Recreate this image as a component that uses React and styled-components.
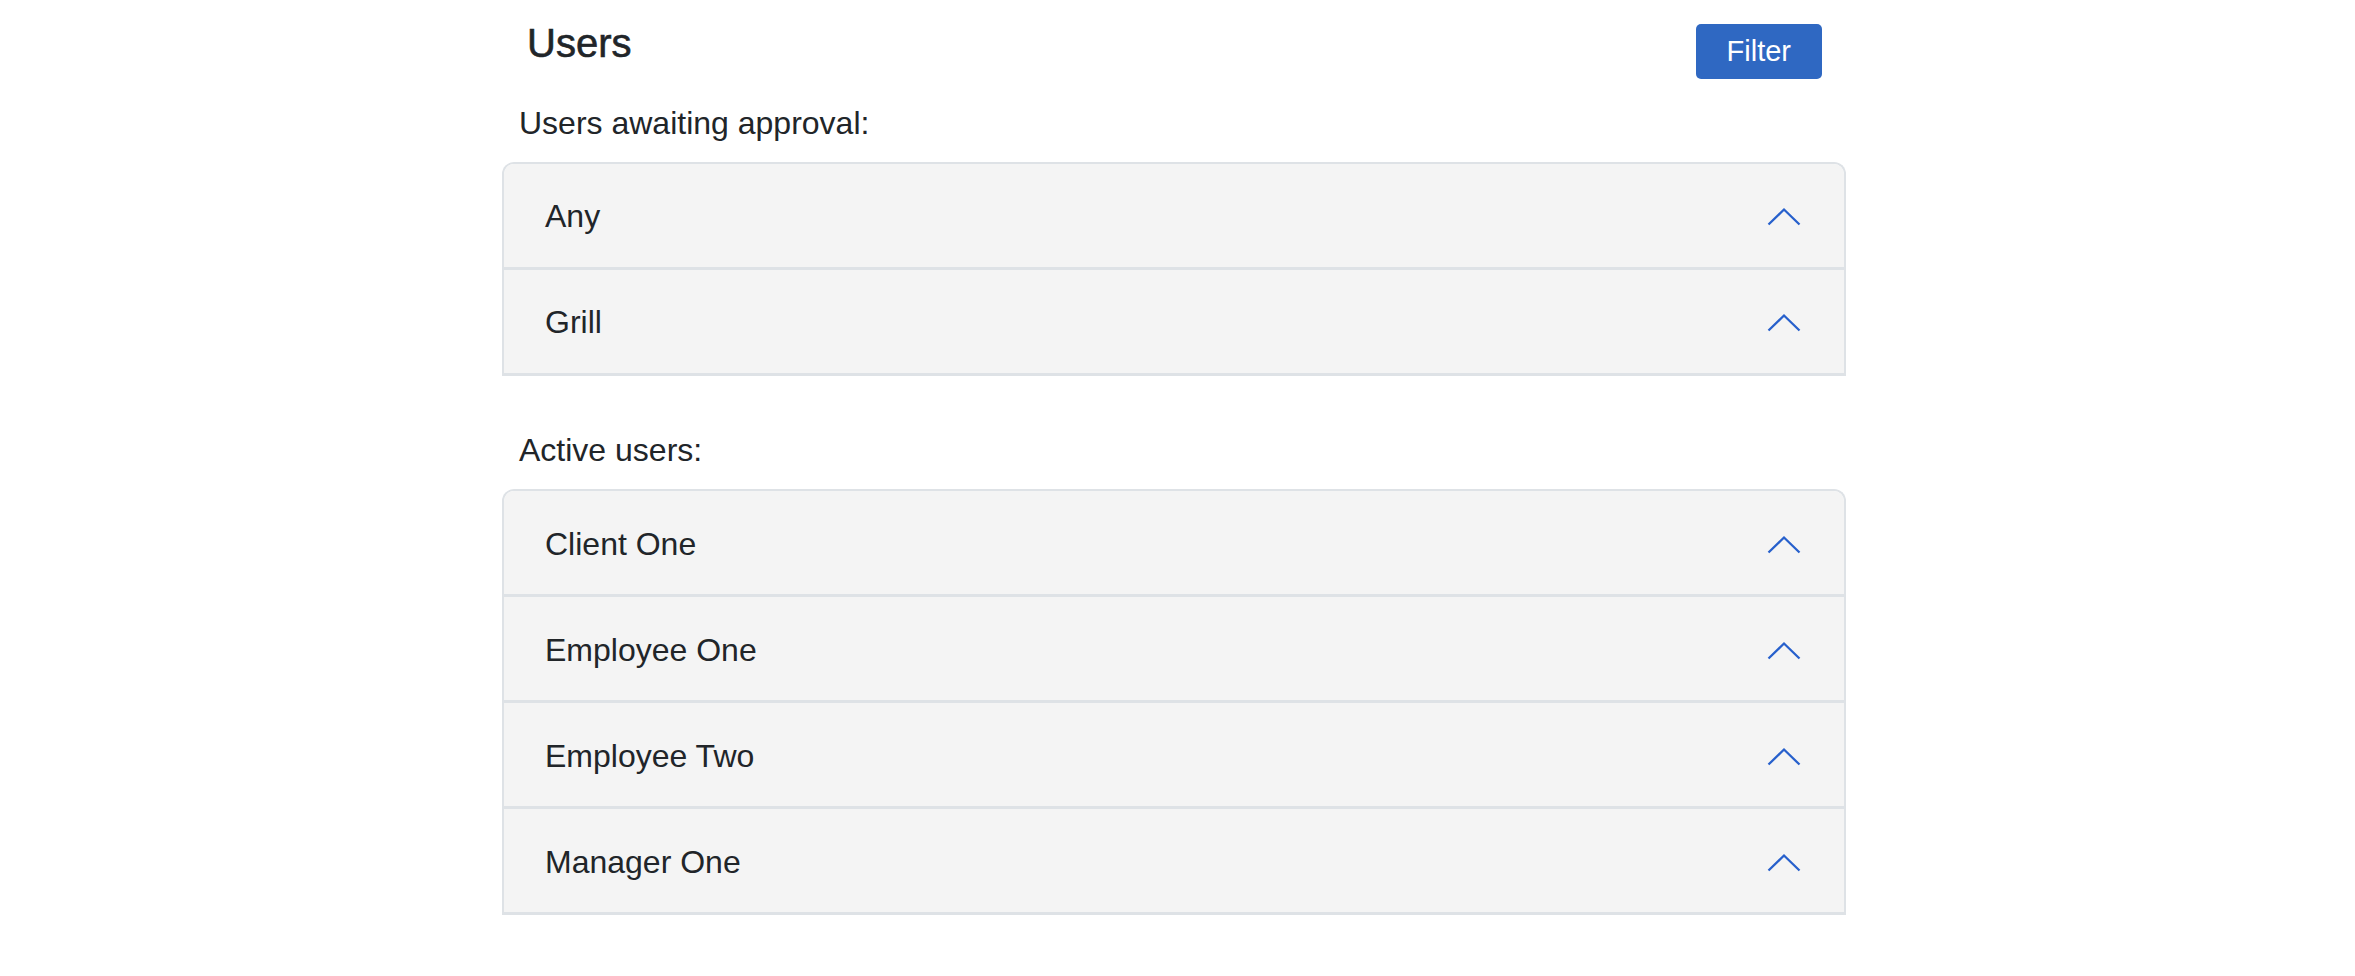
import styled, { createGlobalStyle } from "styled-components";

const GlobalStyle = createGlobalStyle`
    body {
        margin: 0;
        background: #ffffff;
        color: #212529;
        font-family: "Liberation Sans", Arial, sans-serif;
    }
`;

const Page = styled.main`
    width: 1344px;
    margin-left: 502px;
    padding-top: 19px;
`;

const Header = styled.header`
    display: flex;
    justify-content: space-between;
    align-items: flex-start;
    height: 48px;
    padding: 0 24px 0 25px;
`;

const Title = styled.h5`
    margin: 0;
    font-size: 40px;
    line-height: 48px;
    font-weight: 500;
    color: #212529;
    -webkit-text-stroke: 0.6px #212529;
`;

const FilterButton = styled.button`
    margin-top: 5px;
    height: 55px;
    padding: 0 31px;
    border: none;
    border-radius: 5px;
    background: #2f68c2;
    color: #ffffff;
    font-family: "Liberation Sans", Arial, sans-serif;
    font-size: 29px;
    line-height: 55px;
`;

const Label = styled.p`
    margin: ${(p) => p.$top}px 0 15px;
    padding-left: 17px;
    font-size: 32px;
    line-height: 48px;
`;

const Accordion = styled.section`
    border: 2px solid #dee2e6;
    border-bottom: none;
    border-radius: 12px 12px 0 0;
    overflow: hidden;
`;

const Row = styled.div`
    display: flex;
    align-items: center;
    justify-content: space-between;
    padding: 28.5px 40px 26.5px 41px;
    background: #f4f4f4;
    border-bottom: 3px solid #dee2e6;
    font-size: 32px;
    line-height: 48px;
    color: #212529;
`;

const Chevron = styled.svg`
    width: 40px;
    height: 40px;
    flex-shrink: 0;
    fill: none;
    stroke: #2760cc;
    stroke-width: 2.3;
`;

function ChevronUp() {
    return (
        <Chevron viewBox="0 0 40 40">
            <polyline points="4.5,28.5 20,13.5 35.5,28.5" />
        </Chevron>
    );
}

function UserList({ users }) {
    return (
        <Accordion>
            {users.map((name) => (
                <Row key={name}>
                    <span>{name}</span>
                    <ChevronUp />
                </Row>
            ))}
        </Accordion>
    );
}

const pending = ["Any", "Grill"];
const active = ["Client One", "Employee One", "Employee Two", "Manager One"];

export default function App() {
    return (
        <>
            <GlobalStyle />
            <Page>
                <Header>
                    <Title>Users</Title>
                    <FilterButton>Filter</FilterButton>
                </Header>
                <Label $top={31.6}>Users awaiting approval:</Label>
                <UserList users={pending} />
                <Label $top={50.6}>Active users:</Label>
                <UserList users={active} />
            </Page>
        </>
    );
}
